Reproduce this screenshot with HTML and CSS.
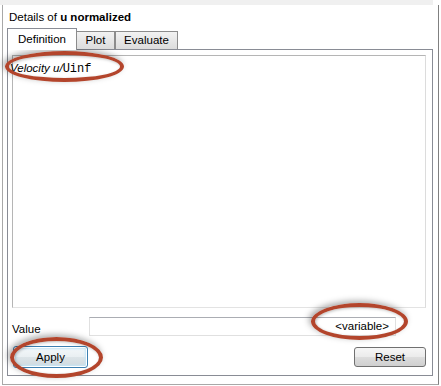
FILE: index.html
```html
<!DOCTYPE html>
<html lang="en">
<head>
    <meta charset="UTF-8">
    <title>Details of u normalized</title>
    <link rel="stylesheet" href="styles.css">
</head>
<body>
    <div class="topbar"></div>
    <div class="frame">
        <div class="title">Details of <strong>u normalized</strong></div>

        <div class="tabs">
            <div class="tab active">Definition</div>
            <div class="tab tab-plot">Plot</div>
            <div class="tab tab-evaluate">Evaluate</div>
        </div>

        <div class="pane">
            <div class="editor">
                <span class="expr">Velocity u/</span><span class="code">Uinf</span>
            </div>

            <div class="value-row">
                <label>Value</label>
                <div class="value-field">&lt;variable&gt;</div>
            </div>

            <div class="button-row">
                <button class="btn focused">Apply</button>
                <button class="btn">Reset</button>
            </div>
        </div>
    </div>

    <!-- red annotation marks drawn over the dialog -->
    <div class="mark mark-expr"></div>
    <div class="mark mark-variable"></div>
    <div class="mark mark-apply"></div>
</body>
</html>
```

FILE: styles.css
```css
* {
    margin: 0;
    padding: 0;
    box-sizing: border-box;
}

body {
    width: 441px;
    height: 386px;
    background: white;
    font-family: "Liberation Sans", Arial, sans-serif;
    font-size: 11.5px;
    color: #000;
    position: relative;
    overflow: hidden;
}

.topbar {
    height: 5px;
    width: 433px;
    background: #f0f0f0;
}

.frame {
    margin-left: 2px;
    width: 437px;
    height: 380px;
    border-left: 1px solid #a8a8a8;
    border-right: 1px solid #808080;
    border-bottom: 1px solid #a8a8a8;
    display: flex;
    flex-direction: column;
}

.title {
    height: 23px;
    padding: 5px 0 0 6px;
    line-height: 14px;
}

.tabs {
    display: flex;
    align-items: flex-end;
    height: 21px;
    margin-left: 4px;
    position: relative;
    z-index: 1;
}

.tab {
    height: 18px;
    text-align: center;
    line-height: 17px;
    border: 1px solid #8c8c8c;
    border-bottom: none;
    background: linear-gradient(#f2f2f2, #dcdcdc);
    margin-left: -1px;
}

.tab.active {
    width: 70px;
    height: 22px;
    margin-left: 0;
    margin-bottom: -1px;
    background: white;
    line-height: 20px;
    border-color: #898c95;
}

.tab-plot {
    width: 39px;
}

.tab-evaluate {
    width: 63px;
    margin-left: 0;
}

.pane {
    margin-left: 4px;
    width: 426px;
    height: 327px;
    border: 1px solid #898c95;
    padding: 5px 6px 0 4px;
    display: flex;
    flex-direction: column;
}

.editor {
    height: 253px;
    border: 1px solid #b5b5b5;
    border-right-color: #dcdcdc;
    border-bottom-color: #e3e3e3;
    padding: 5px 0 0 0;
    text-indent: -3px;
    line-height: 14px;
}

.expr {
    font-style: italic;
}

.code {
    font-family: "Liberation Mono", "Courier New", monospace;
    font-size: 12px;
}

.value-row {
    display: flex;
    align-items: center;
    margin-top: 9px;
    height: 19px;
}

.value-row label {
    width: 77px;
    padding-top: 4px;
}

.value-field {
    width: 307px;
    height: 19px;
    border: 1px solid #e0e0e0;
    border-top-color: #abadb3;
    text-align: right;
    padding-right: 6px;
    line-height: 17px;
}

.button-row {
    display: flex;
    justify-content: space-between;
    align-items: center;
    margin-top: 10px;
}

.btn {
    font-family: "Liberation Sans", Arial, sans-serif;
    font-size: 11.5px;
    width: 72px;
    height: 20px;
    border: 1px solid #707070;
    border-radius: 3px;
    background: linear-gradient(#f6f6f6 0%, #ebebeb 50%, #dddddd 51%, #cfcfcf 100%);
    color: #000;
}

.btn.focused {
    width: 75px;
    height: 22px;
    margin-left: 1px;
    border-color: #3c7fb1;
    background: linear-gradient(#f4f8fa 0%, #e9eff2 50%, #dce4e8 51%, #cfd9de 100%);
    box-shadow: inset 0 0 0 1px #ffffff, inset 0 0 2px 2px #c4e5f6;
}

.mark {
    position: absolute;
    border: 4px solid #b3452c;
    border-radius: 50%;
    box-shadow: -2px -2px 6px rgba(0, 0, 0, 0.35), inset 1px 1px 3px rgba(0, 0, 0, 0.25);
}

.mark-expr {
    left: 5px;
    top: 51px;
    width: 119px;
    height: 31px;
}

.mark-variable {
    left: 311px;
    top: 303px;
    width: 97px;
    height: 37px;
}

.mark-apply {
    left: 10px;
    top: 337px;
    width: 93px;
    height: 41px;
}
```
